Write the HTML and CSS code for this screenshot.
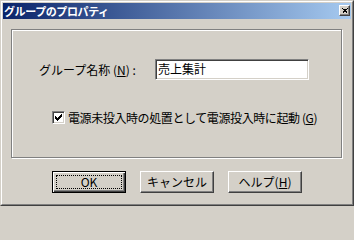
FILE: index.html
```html
<!DOCTYPE html>
<html lang="ja">
<head>
<meta charset="utf-8">
<link rel="stylesheet" href="styles.css">
</head>
<body>
<div class="window">
  <div class="frame">
    <div class="titlebar">
      <span class="title">グループのプロパティ</span>
      <span class="close">
        <svg width="8" height="7" viewBox="0 0 8 7" shape-rendering="crispEdges"><path d="M0 0h2v1h-2zM6 0h2v1h-2zM1 1h2v1h-2zM5 1h2v1h-2zM2 2h4v1h-4zM3 3h2v1h-2zM2 4h4v1h-4zM1 5h2v1h-2zM5 5h2v1h-2zM0 6h2v1h-2zM6 6h2v1h-2z" fill="#000"/></svg>
      </span>
    </div>
    <div class="group">
      <div class="row-name">
        <span class="label">グループ名称 (<u>N</u>) :</span>
        <div class="input">売上集計</div>
      </div>
      <div class="row-check">
        <span class="checkbox">
          <svg width="7" height="7" viewBox="0 0 7 7" shape-rendering="crispEdges"><path d="M0 2h1v3h-1zM1 3h1v3h-1zM2 4h1v3h-1zM3 3h1v3h-1zM4 2h1v3h-1zM5 1h1v3h-1zM6 0h1v3h-1z" fill="#000"/></svg>
        </span>
        <span class="check-label">電源未投入時の処置として電源投入時に起動 (<u>G</u>)</span>
      </div>
    </div>
    <div class="buttons">
      <div class="btn default"><span class="focus">OK</span></div>
      <div class="btn"><span class="face">キャンセル</span></div>
      <div class="btn"><span class="face">ヘルプ(<u>H</u>)</span></div>
    </div>
  </div>
</div>
</body>
</html>
```
FILE: styles.css
```css
html, body {
  margin: 0;
  padding: 0;
  background: #d4d0c8;
}
body {
  font-family: "Noto Sans CJK JP", "DejaVu Sans", sans-serif;
  font-size: 12px;
  color: #000;
}
.window {
  width: 354px;
  height: 206px;
  box-sizing: border-box;
  border: 1px solid;
  border-color: #d4d0c8 #404040 #404040 #d4d0c8;
  background: #d4d0c8;
}
.frame {
  height: 100%;
  box-sizing: border-box;
  border: 1px solid;
  border-color: #fff #808080 #808080 #fff;
  padding: 1px;
  display: flex;
  flex-direction: column;
}
.titlebar {
  height: 16px;
  background: linear-gradient(to right, #0a246a, #a6caf0);
  display: flex;
  align-items: center;
  justify-content: space-between;
  padding: 0 1px 0 1px;
}
.title {
  color: #fff;
  font-weight: bold;
  font-size: 11px;
  line-height: 16px;
  letter-spacing: -0.4px;
  margin-top: -1px;
}
.close {
  width: 11px;
  height: 11px;
  box-sizing: border-box;
  border: 1px solid;
  border-color: #fff #404040 #404040 #fff;
  box-shadow: inset -1px -1px 0 #808080;
  background: #d4d0c8;
  display: flex;
  align-items: center;
  justify-content: center;
  margin-top: -1px;
}
.close svg { display: block; transform: scale(0.8); }
.group {
  margin: 10px 9px 0 8px;
  height: 129px;
  box-sizing: border-box;
  border: 1px solid #808080;
  box-shadow: 1px 1px 0 #fff, inset 1px 1px 0 #fff;
  display: flex;
  flex-direction: column;
  padding: 29px 0 0 27px;
}
.row-name {
  display: flex;
  align-items: center;
  height: 21px;
}
.label {
  width: 116px;
  line-height: 14px;
}
.input {
  width: 154px;
  height: 21px;
  box-sizing: border-box;
  border: 1px solid;
  border-color: #808080 #fff #fff #808080;
  box-shadow: inset 1px 1px 0 #404040, inset -1px -1px 0 #d4d0c8;
  background: #fff;
  padding: 0 0 0 2px;
  line-height: 18px;
  font-size: 12px;
}
.row-check {
  display: flex;
  align-items: center;
  margin: 31px 0 0 13px;
  height: 13px;
}
.checkbox {
  width: 13px;
  height: 13px;
  box-sizing: border-box;
  border: 1px solid;
  border-color: #808080 #fff #fff #808080;
  box-shadow: inset 1px 1px 0 #404040, inset -1px -1px 0 #d4d0c8;
  background: #fff;
  display: flex;
  align-items: center;
  justify-content: center;
  margin-right: 3px;
}
.checkbox svg { display: block; }
.check-label {
  line-height: 14px;
  white-space: nowrap;
  letter-spacing: -0.4px;
}
.buttons {
  display: flex;
  justify-content: center;
  gap: 14px;
  margin-top: 13px;
}
.btn {
  width: 74px;
  height: 22px;
  box-sizing: border-box;
  border: 1px solid;
  border-color: #fff #404040 #404040 #fff;
  box-shadow: inset -1px -1px 0 #808080;
  display: flex;
  padding: 3px;
}
.btn.default {
  border-color: #000;
  box-shadow: inset 1px 1px 0 #fff, inset -1px -1px 0 #404040, inset -2px -2px 0 #808080;
}
.face, .focus {
  flex: 1;
  display: flex;
  align-items: center;
  justify-content: center;
  line-height: 14px;
}
.focus {
  border: 1px dotted #000;
}
u { text-decoration: underline; text-underline-offset: 1px; }
```
